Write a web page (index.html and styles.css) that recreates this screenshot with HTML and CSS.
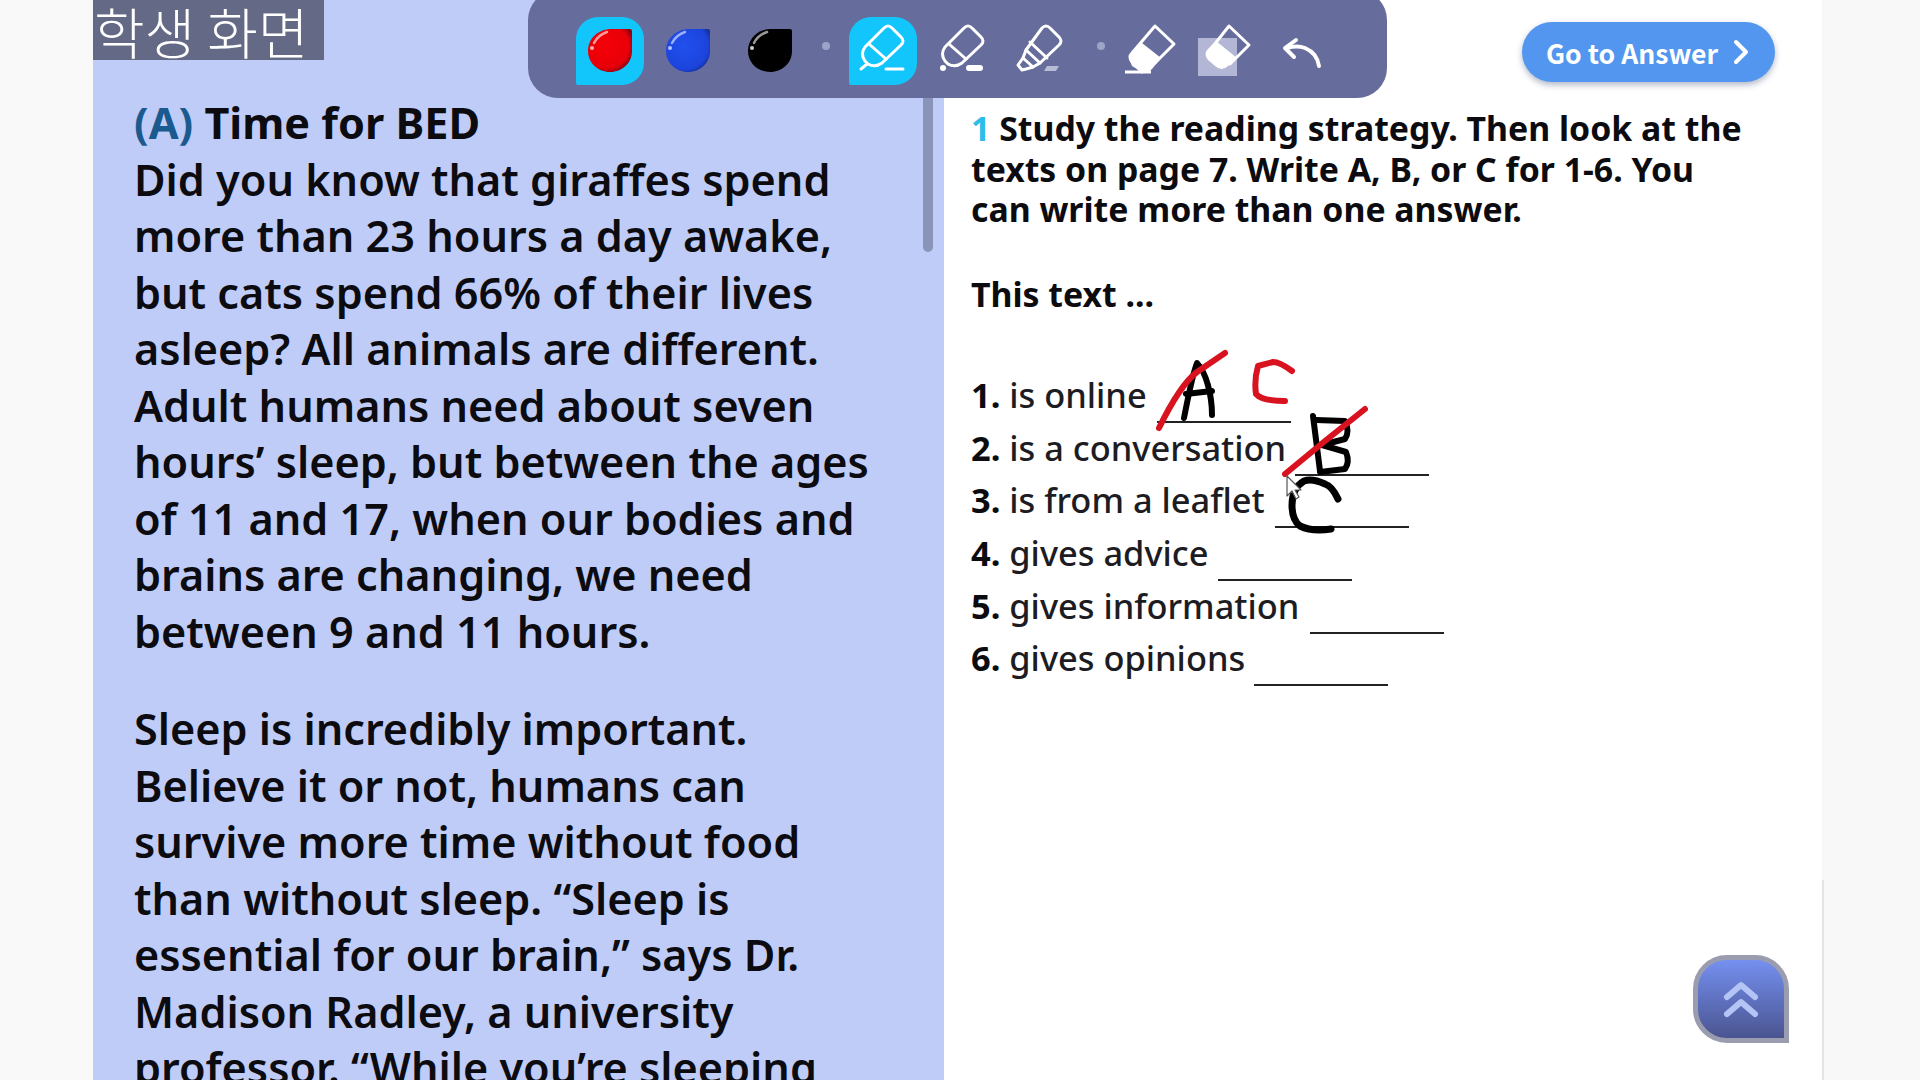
FILE: index.html
```html
<!DOCTYPE html>
<html lang="en">
<head>
<meta charset="utf-8">
<title>Student screen</title>
<link rel="stylesheet" href="styles.css">
</head>
<body>
<div class="page">
  <div class="gutter-left"></div>
  <main class="reading">
    <div class="reading-text">
      <p class="para"><span class="head"><span class="head-mark">(A)</span> Time for BED</span><br>
      Did you know that giraffes spend<br>more than 23 hours a day awake,<br>but cats spend 66% of their lives<br>asleep? All animals are different.<br>Adult humans need about seven<br>hours’ sleep, but between the ages<br>of 11 and 17, when our bodies and<br>brains are changing, we need<br>between 9 and 11 hours.</p>
      <p class="para">Sleep is incredibly important.<br>Believe it or not, humans can<br>survive more time without food<br>than without sleep. “Sleep is<br>essential for our brain,” says Dr.<br>Madison Radley, a university<br>professor. “While you’re sleeping</p>
    </div>
    <div class="scrollbar"></div>
  </main>
  <section class="task">
    <p class="task-title"><span class="task-num">1</span> Study the reading strategy. Then look at the<br>texts on page 7. Write A, B, or C for 1-6. You<br>can write more than one answer.</p>
    <p class="task-lead">This text ...</p>
    <ol class="items">
      <li><b>1.</b> is online<span class="blank b1"></span></li>
      <li><b>2.</b> is a conversation<span class="blank b2"></span></li>
      <li><b>3.</b> is from a leaflet<span class="blank b3"></span></li>
      <li><b>4.</b> gives advice<span class="blank b4"></span></li>
      <li><b>5.</b> gives information<span class="blank b5"></span></li>
      <li><b>6.</b> gives opinions<span class="blank b6"></span></li>
    </ol>
  </section>
  <div class="gutter-right"><div class="gutter-line"></div></div>
</div>

<div class="tag">학생 화면</div>

<nav class="toolbar">
  <button class="tool selected"><svg width="68" height="68" viewBox="0 0 68 68"><defs><radialGradient id="gr" cx=".42" cy=".4" r=".62"><stop offset="0" stop-color="#f50008"/><stop offset=".82" stop-color="#e80008"/><stop offset="1" stop-color="#98000f"/></radialGradient></defs><path d="M56 14 Q56 12 54 12 L34 12 C21 13 12 22 12 34 C12 46 22 55 34 55 C46 55 56 46 56 34 Z" fill="url(#gr)"/><path d="M18 26 Q22 18 31 15" stroke="#ff9a9a" stroke-width="2.5" fill="none" stroke-linecap="round"/><circle cx="16" cy="31" r="2" fill="#ffb0b0"/></svg></button>
  <button class="tool gap-blue"><svg width="68" height="68" viewBox="0 0 68 68"><defs><radialGradient id="gb" cx=".42" cy=".4" r=".65"><stop offset="0" stop-color="#2150ee"/><stop offset=".82" stop-color="#1c44dc"/><stop offset="1" stop-color="#16309c"/></radialGradient></defs><path d="M56 14 Q56 12 54 12 L34 12 C21 13 12 22 12 34 C12 46 22 55 34 55 C46 55 56 46 56 34 Z" fill="url(#gb)"/><path d="M18 26 Q22 18 31 15" stroke="#9ab0ff" stroke-width="2.5" fill="none" stroke-linecap="round"/><circle cx="16" cy="31" r="2" fill="#b4c6ff"/></svg></button>
  <button class="tool gap-black"><svg width="68" height="68" viewBox="0 0 68 68"><path d="M56 14 Q56 12 54 12 L34 12 C21 13 12 22 12 34 C12 46 22 55 34 55 C46 55 56 46 56 34 Z" fill="#000"/><path d="M18 26 Q22 18 31 15" stroke="#999" stroke-width="2.5" fill="none" stroke-linecap="round"/><circle cx="16" cy="31" r="2" fill="#ccc"/></svg></button>
  <span class="dot dot-a"></span>
  <button class="tool selected"><svg width="68" height="68" viewBox="0 0 68 68" fill="none" stroke="#fff" stroke-width="3" stroke-linejoin="round" stroke-linecap="round"><path d="M35 11 Q39 7 43 11 L52 20 Q56 24 52 28 L33 46 Q26 51 19 47 L16 44 Q11 37 16 30 Z"/><path d="M20 27 L37 42"/><path d="M18 47 L12 52"/><path d="M37 52 H54"/></svg></button>
  <button class="tool gap-12"><svg width="68" height="68" viewBox="0 0 68 68" fill="none" stroke="#fff" stroke-width="3" stroke-linejoin="round" stroke-linecap="round"><path d="M35 11 Q39 7 43 11 L52 20 Q56 24 52 28 L33 46 Q26 51 19 47 L16 44 Q11 37 16 30 Z"/><path d="M20 27 L37 42"/><circle cx="14" cy="51" r="3" fill="#fff" stroke="none"/><rect x="37" y="48" width="17" height="6" rx="3" fill="#fff" stroke="none"/></svg></button>
  <button class="tool gap-10"><svg width="68" height="68" viewBox="0 0 68 68" fill="none" stroke="#fff" stroke-width="3" stroke-linejoin="round" stroke-linecap="round"><path d="M35 11 Q39 7 43 11 L52 20 Q56 24 52 28 L33 46 L26 50 L16 41 L19 33 Z"/><path d="M23 25 L40 41"/><path d="M19 33 L33 46"/><path d="M16 41 L11 48 L15 53 L19 52 L26 50"/><path d="M37 54 L40 49 H52 L49 54 Z" fill="#b9bcd6" stroke="none"/></svg></button>
  <span class="dot dot-b"></span>
  <button class="tool"><svg width="68" height="68" viewBox="0 0 68 68"><path d="M37 9 L56 27 L38 45 L24 55 L14 45 Q10 40 14 36 Z" fill="none" stroke="#fff" stroke-width="3" stroke-linejoin="round"/><path d="M24 26 L43 41 L34 52 Q30 56 24 55 L14 49 Q10 40 14 36 Z" fill="#fff"/><path d="M7 55 H33" stroke="#fff" stroke-width="3"/></svg></button>
  <button class="tool eraser"><span class="eraser-bg"></span><svg width="68" height="68" viewBox="0 0 68 68"><path d="M39 9 L59 28 L40 47 L20 33 Z" fill="none" stroke="#fff" stroke-width="3" stroke-linejoin="round"/><path d="M26 24 L47 41 L38 49 Q32 55 25 49 L18 43 Q13 36 18 32 Z" fill="#fff"/></svg></button>
  <button class="tool undo"><svg width="68" height="68" viewBox="0 0 68 68" fill="none" stroke="#fff" stroke-width="4" stroke-linecap="round" stroke-linejoin="round"><path d="M21 23 L10 31 L19 40"/><path d="M12 31 Q22 28 30 31 Q42 36 44 49"/></svg></button>
</nav>

<button class="answer-btn">Go to Answer<svg width="18" height="28" viewBox="0 0 18 28" fill="none" stroke="#fff" stroke-width="4" stroke-linecap="round" stroke-linejoin="round"><path d="M4 4 L14 14 L4 24"/></svg></button>

<button class="up-btn"><svg width="36" height="38" viewBox="0 0 36 38" fill="none" stroke="#b4c4f4" stroke-width="6" stroke-linecap="round" stroke-linejoin="round"><path d="M4 17 L18 5 L32 17"/><path d="M4 34 L18 22 L32 34"/></svg></button>

<svg class="ink" width="1920" height="1080" viewBox="0 0 1920 1080" fill="none" stroke-linecap="round" stroke-linejoin="round">
  <g stroke="#000" stroke-width="6">
    <path d="M1184 418 C1188 398 1192 376 1197 363 C1206 372 1212 395 1212 415"/>
    <path d="M1186 394 L1212 391"/>
    <path d="M1313 416 L1320 471"/>
    <path d="M1316 420 L1345 421 Q1350 432 1345 439 L1322 445 L1346 452 Q1350 462 1345 469 L1320 472"/>
    <path d="M1338 499 Q1332 486 1325 484 Q1312 478 1304 481 Q1292 488 1292 505 Q1292 520 1300 526 Q1312 532 1331 529" stroke-width="7"/>
  </g>
  <g stroke="#d8121f" stroke-width="6">
    <path d="M1159 428 Q1180 385 1197 372 L1225 353"/>
    <path d="M1292 371 Q1280 362 1273 362 L1258 366 Q1254 380 1256 394 Q1262 401 1285 401"/>
    <path d="M1285 474 L1325 441 L1365 409"/>
  </g>
  <path d="M1287 476 L1287 496 L1292 491 L1296 499 L1299 497 L1295 490 L1301 490 Z" fill="#fff" stroke="#555" stroke-width="1.2"/>
</svg>
</body>
</html>
```

FILE: styles.css
```css
* { box-sizing: border-box; }
html, body { margin: 0; height: 100%; overflow: hidden; }
body { font-family: "Noto Sans", "Noto Sans CJK KR", sans-serif; color: #0c0c10; background: #fff; }
p { margin: 0; }
button { border: 0; padding: 0; background: none; font: inherit; }

.page { display: flex; width: 1920px; height: 1080px; }
.gutter-left { width: 93px; background: #f9f9fa; }
.gutter-right { width: 98px; background: #f8f8f9; padding-top: 880px; }
.gutter-line { width: 2px; height: 200px; background: #e4e4e6; }

.reading { position: relative; width: 851px; height: 1080px; overflow: hidden; background: #c0ccf8; padding: 95px 0 0 41px; }
.reading-text { font-size: 43.2px; line-height: 56.5px; font-weight: 600; white-space: nowrap; }
.para + .para { margin-top: 41px; }
.head { font-weight: 700; }
.head-mark { color: #1b5a8e; }
.scrollbar { position: absolute; top: 90px; right: 11px; width: 10px; height: 162px; background: #8a93b8; border-radius: 0 0 5px 5px; }

.task { width: 878px; padding: 108px 0 0 27px; }
.task-title { font-size: 33.8px; line-height: 40.5px; font-weight: 700; white-space: nowrap; }
.task-num { color: #2cbdea; }
.task-lead { font-size: 33.8px; line-height: 40.5px; font-weight: 700; margin-top: 44px; }
.items { list-style: none; margin: 55px 0 0; padding: 0; font-size: 34.4px; line-height: 52.6px; font-weight: 500; color: #1c1c22; }
.items li { height: 52.7px; white-space: nowrap; }
.items b { color: #0c0c10; }
.blank { display: inline-block; width: 134px; height: 34px; border-bottom: 2px solid #222; vertical-align: -15px; }
.b1 { margin-left: 10px; }
.b2 { margin-left: 9px; }
.b3 { margin-left: 10px; }
.b4 { margin-left: 10px; }
.b5 { margin-left: 11px; }
.b6 { margin-left: 9px; }

.tag { position: absolute; left: 93px; top: 0; width: 231px; height: 60px; background: #646a85; color: #fff; font-family: "Noto Sans CJK KR", sans-serif; font-weight: 300; font-size: 55px; line-height: 60px; white-space: nowrap; padding-left: 1px; overflow: hidden; }

.toolbar { position: absolute; left: 528px; top: -10px; width: 859px; height: 108px; padding: 27px 0 0 48px; background: #666c9c; border-radius: 30px; display: flex; align-items: flex-start; }
.tool { width: 68px; height: 68px; display: flex; flex: none; position: relative; }
.tool.selected { background: #12c6fb; border-radius: 22px 22px 22px 2px; }
.gap-blue { margin-left: 10px; }
.gap-black { margin-left: 14px; }
.gap-12 { margin-left: 12px; }
.gap-10 { margin-left: 10px; }
.dot { width: 8px; height: 8px; border-radius: 50%; background: #9ea3c8; margin-top: 25px; flex: none; }
.dot-a { margin-left: 18px; margin-right: 19px; }
.dot-b { margin-left: 22px; margin-right: 13px; }
.eraser { margin-left: 4px; }
.undo { margin-left: 17px; }
.eraser-bg { position: absolute; left: 8px; top: 21px; width: 39px; height: 38px; background: #b3b6d4; }
.eraser svg { position: relative; }

.answer-btn { position: absolute; left: 1522px; top: 22px; width: 253px; height: 60px; border-radius: 30px; background: #5296ef; box-shadow: 0 3px 6px rgba(60, 80, 120, .4); color: #fff; font-family: "Noto Sans CJK KR", sans-serif; font-size: 26.6px; font-weight: 700; display: flex; align-items: center; gap: 14px; padding-left: 24px; white-space: nowrap; }

.up-btn { position: absolute; left: 1693px; top: 955px; width: 96px; height: 88px; border: 5px solid #9a9cb0; border-radius: 34px 34px 0 34px; background: linear-gradient(#7590f0, #4a5490); display: flex; align-items: center; justify-content: center; }

.ink { position: absolute; left: 0; top: 0; pointer-events: none; }
```
